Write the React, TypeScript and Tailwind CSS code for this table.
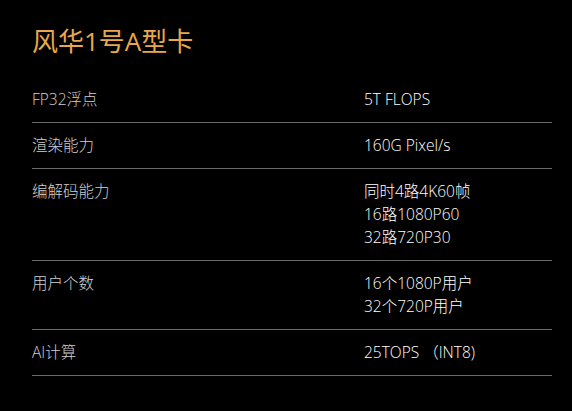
import React from "react";

const specs: { label: string; values: string[] }[] = [
  { label: "FP32浮点", values: ["5T FLOPS"] },
  { label: "渲染能力", values: ["160G Pixel/s"] },
  { label: "编解码能力", values: ["同时4路4K60帧", "16路1080P60", "32路720P30"] },
  { label: "用户个数", values: ["16个1080P用户", "32个720P用户"] },
  { label: "AI计算", values: ["25TOPS （INT8)"] },
];

export default function App() {
  return (
    <div
      className="bg-black w-[572px] h-[411px] pl-8 pr-5 pt-[25px]"
      style={{ fontFamily: '"Open Sans", "Noto Sans CJK SC", sans-serif' }}
    >
      <h1 className="text-[26px] leading-[32px] text-[#e9a84c] h-[52px]">风华1号A型卡</h1>

      <div>
        {specs.map((row) => (
          <div key={row.label} className="flex py-[11px] border-b border-[#6a6a6a] text-[15.5px] leading-[23px] font-light">
            <div className="w-[332px] text-[#d0d0d6]">{row.label}</div>
            <div className="flex flex-col text-white">
              {row.values.map((v) => (
                <span key={v}>{v}</span>
              ))}
            </div>
          </div>
        ))}
      </div>
    </div>
  );
}
